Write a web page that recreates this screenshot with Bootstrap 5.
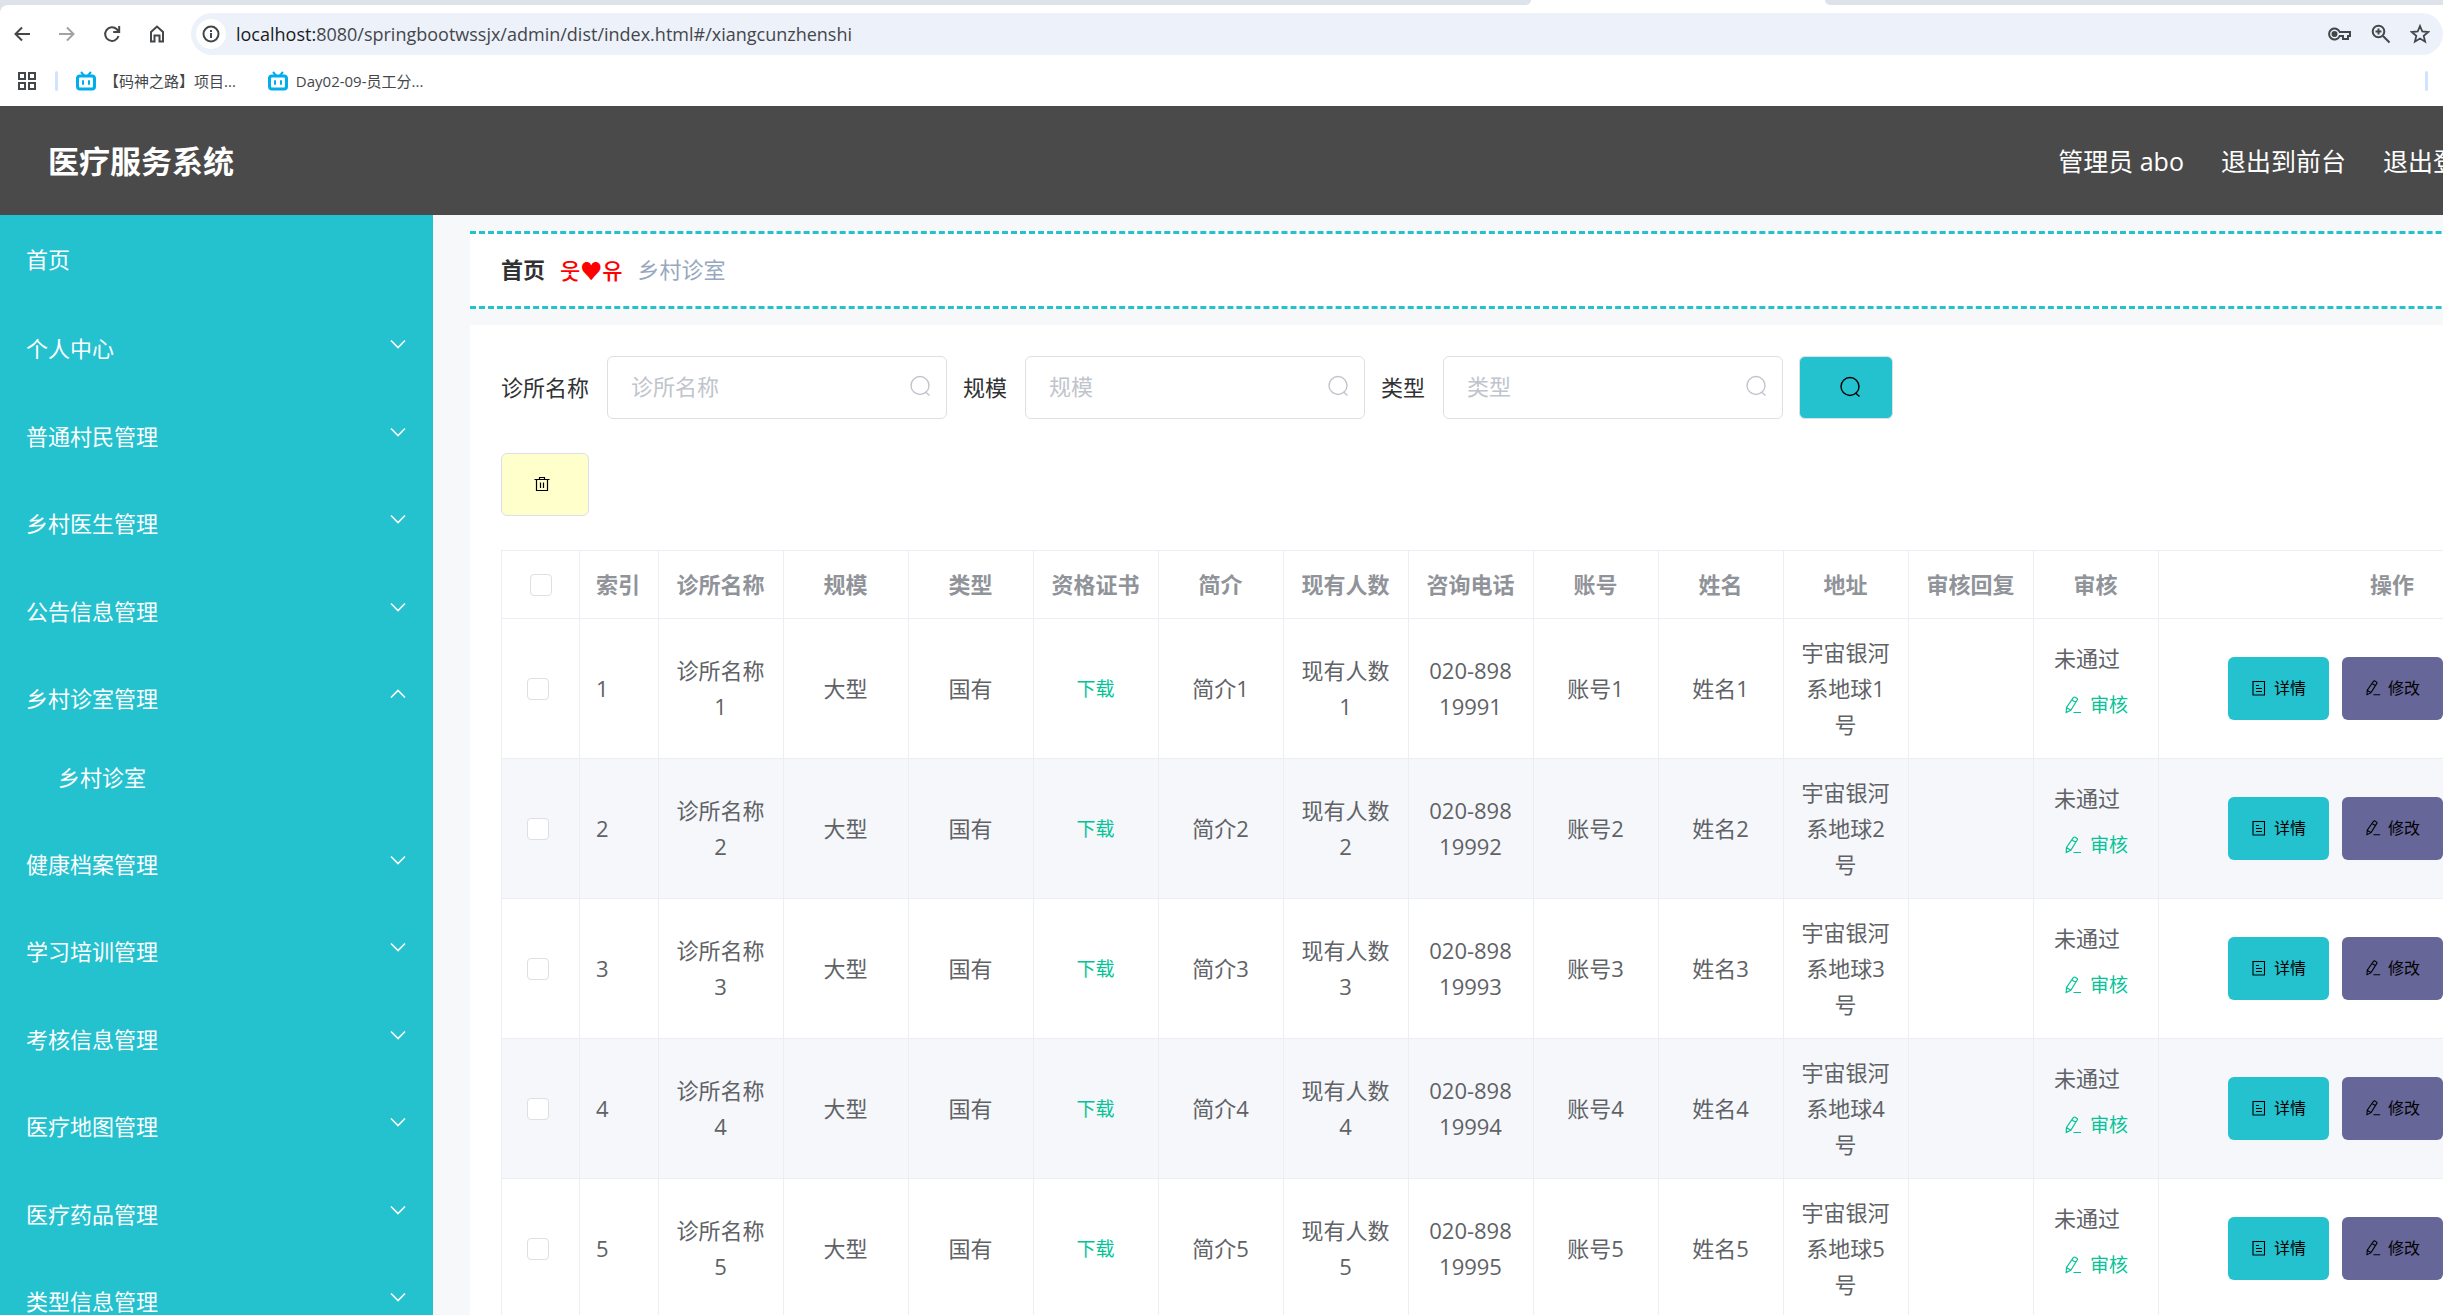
<!DOCTYPE html>
<html lang="zh-CN">
<head>
<meta charset="utf-8">
<meta name="viewport" content="width=device-width, initial-scale=1">
<title>医疗服务系统</title>
<link href="https://cdn.jsdelivr.net/npm/bootstrap@5.3.0/dist/css/bootstrap.min.css" rel="stylesheet">
<style>
:root{--teal:#24c2cf;--line:#ebeef5;--edge:#dcdfe6;--green:#06c397}
body{font-family:"Open Sans","Noto Sans CJK SC",sans-serif;font-size:22px;line-height:36px;color:#303133;background:#fff;height:100vh;overflow:hidden}
svg{display:block;flex:none;fill:none;stroke:currentColor}
a{text-decoration:none;color:inherit}
/* browser bars */
.chrome{background:#dee3ea;color:#44474a}
.strip{height:5px}
.strip .gap-l{flex:1;background:#dee3ea;border-bottom-right-radius:12px}
.strip .tab-on{width:294px}
.strip .gap-r{width:618px;background:#dee3ea;border-bottom-left-radius:12px}
.toolbar{border-top-left-radius:8px;padding:8px 0 0 12px}
.tool-btn{width:20px;height:20px;padding:0;border:0;background:none;color:inherit;flex:none}
.tool-btn.wide{width:24px}
.tools{gap:25px;width:179px}
.omni{height:42px;border-radius:21px;background:#ecf1fa;padding:0 13px 0 5px}
.omni-icons{gap:19px}
.info{width:30px;height:30px;border-radius:50%;background:#fff}
.url{border:0;background:none;outline:0;padding:0;margin-left:10px;font-size:18px;line-height:24px}
.url b{font-weight:400;color:#1a1b1d}
.marks{height:51px;padding:0 15px 0 17px;font-size:15px;line-height:20px}
.marks .bar{margin:0 18px}
.marks .bar:last-child{margin:0 0 0 auto}
.bar{width:3px;height:20px;border-radius:2px;background:#d3e3fd}
.bili{color:#00aeec}
/* application */
.shell{width:max-content;min-width:100%}
.topbar{height:109px;background:#4a4a4a;color:#fff;padding:0 212px 0 48px}
.brand-name{font-size:31px;font-weight:700;line-height:40px}
.topbar nav{gap:37px;font-size:25px}
.side{width:433px;background:var(--teal);color:#fff;flex:none;height:1100px}
.side li>a{display:flex;align-items:center;justify-content:space-between;height:87px;padding:0 27px 0 26px}
.side li:first-child{margin-bottom:2px}
.side li:nth-child(even)>a{height:88px}
.side li svg{margin-bottom:8px}
.side ul ul a{height:78px;padding-left:58px;padding-bottom:6px}
.side ul ul li:first-child>a{height:76px}
.page{background:#f7f8fa;padding:16px 37px 0}
.crumbs{background:#fff;border-top:3px dashed var(--teal);border-bottom:3px dashed var(--teal);height:78px;padding:0 31px 2px;gap:15px}
.crumbs .love{color:#f00;font-weight:500;font-family:"Noto Sans CJK KR",sans-serif}
.crumbs .here{color:#97a8be}
.panel{background:#fff;margin-top:16px;padding:31px;height:1000px}
.field{gap:18px}
.field label{padding-bottom:2px}
.field-box{position:relative;width:340px}
.field-box input{width:100%;height:63px;border:1px solid var(--edge);border-radius:6px;font-size:22px;padding:0 60px 3px 23px;box-shadow:none}
.field-box input::placeholder{color:#c0c4cc;opacity:1}
.field-box svg{position:absolute;right:16px;top:19px;color:#c0c4cc}
.filters{gap:16px}
.act{height:63px;border-radius:6px;border:1px solid var(--edge);color:#000;padding:0 0 2px;display:flex;align-items:center;justify-content:center}
.act:hover{color:#000}
.act-find{width:94px;background:var(--teal);padding-left:8px}
.act-del{width:88px;background:#ffc;margin-top:34px;padding-right:6px}
.grid{width:2126px;table-layout:fixed;border-collapse:collapse;margin-top:34px;border:1px solid var(--line)}
.grid th,.grid td{border:1px solid var(--line);padding:0 17px 2px 16px;text-align:center;word-break:break-all;color:#606266}
.grid th{height:68px;color:#909399;font-weight:700}
.grid td{height:140px}
.grid tbody tr:nth-child(even){background:#f5f7fb}
.grid .left{text-align:left}
.grid .form-check-input{width:22px;height:22px;border:1px solid var(--edge);border-radius:4px;margin:0;display:block;background-color:#fff}
.grid th .form-check-input{margin:0 auto}
.grid td.tick{padding:0 0 0 25px}
.grid th.tick{padding:0}
.txt-btn{border:0;background:none;color:var(--green);font-size:19px;padding:0 0 2px;line-height:32px}
.grid td.audit{text-align:left;padding-left:20px}
.grid td.audit .txt-btn{display:flex;align-items:center;gap:8px;height:60px;padding-left:10px}
.grid td.deeds{padding:0 0 0 69px}
.ops{gap:13px}
.ops .btn{height:63px;width:101px;border:0;border-radius:6px;font-size:16px;line-height:24px;padding:0 0 1px;color:#000;display:flex;align-items:center;justify-content:center;gap:7px}
.b-view{background:var(--teal)}.b-edit{background:#669}
</style>
<script src="https://cdn.jsdelivr.net/npm/bootstrap@5.3.0/dist/js/bootstrap.bundle.min.js"></script>
</head>
<body>
<svg width="0" height="0" class="position-absolute" aria-hidden="true">
  <symbol id="i-down" viewBox="0 0 16 10"><path d="M1 1.500l7 7 7-7" stroke-width="1.600"/></symbol>
  <symbol id="i-up" viewBox="0 0 16 10"><path d="M1 8.500l7-7 7 7" stroke-width="1.600"/></symbol>
  <symbol id="i-find" viewBox="0 0 22 22"><circle cx="11" cy="10.500" r="9" stroke-width="1.400"/><path d="M16.500 17l4 3.500" stroke-width="1.400"/></symbol>
  <symbol id="i-doc" viewBox="0 0 16 16"><path d="M2 1.500h11.500v13.500H2zM5 5.500h3M5 8.500h6M5 11.500h6" stroke-width="1.100"/></symbol>
  <symbol id="i-pen" viewBox="0 0 18 18"><path d="M9.500 1.500q.8-.8 1.600-.3l2 1.200q.7.600.2 1.400L6.800 14.200l-4.600 2.300.3-5zM8 4l4 2.400M2.600 11.800l4 2.300M9.500 16.500H17" stroke-width="1.200"/></symbol>
  <symbol id="i-bili" viewBox="0 0 20 20"><path d="M5.500 1.500l2.500 3M14.500 1.500l-2.500 3" stroke-width="2" stroke-linecap="round"/><rect x="1.500" y="5" width="17" height="13" rx="2.500" stroke-width="3"/><path d="M7 10v3M13 10v3" stroke-width="2" stroke-linecap="round"/></symbol>
</svg>

<header class="chrome">
  <div class="strip d-flex bg-white"><div class="gap-l"></div><div class="tab-on"></div><div class="gap-r"></div></div>
  <div class="toolbar bg-white d-flex align-items-center">
    <div class="tools d-flex align-items-center">
      <button class="tool-btn" aria-label="后退"><svg width="20" height="20" stroke-width="2"><path d="M18 10H3.500M10 3.500L3.500 10l6.500 6.500"/></svg></button>
      <button class="tool-btn" aria-label="前进"><svg width="20" height="20" stroke-width="2" opacity=".5"><path d="M2 10h14.500M10 3.500l6.500 6.500-6.500 6.500"/></svg></button>
      <button class="tool-btn" aria-label="刷新"><svg width="20" height="20" stroke-width="2"><path d="M16.500 12a6.800 6.800 0 1 1-1.700-6.700L17 7.500M17.200 2v6h-6"/></svg></button>
      <button class="tool-btn" aria-label="主页"><svg width="20" height="20" stroke-width="2"><path d="M4 8l6-5.500L16 8v9.500h-3.500v-6h-5v6H4z"/></svg></button>
    </div>
    <div class="omni d-flex align-items-center flex-grow-1">
      <span class="info d-flex align-items-center justify-content-center"><svg width="18" height="18" stroke-width="2"><circle cx="9" cy="9" r="7.500"/><path d="M9 8v5M9 5v2"/></svg></span>
      <div class="url flex-grow-1"><b>localhost:</b>8080/springbootwssjx/admin/dist/index.html#/xiangcunzhenshi</div>
      <div class="omni-icons d-flex align-items-center">
        <button class="tool-btn wide" aria-label="密码"><svg width="24" height="20" stroke-width="2"><path d="M11.700 8A5.500 5.500 0 1 0 11.700 12H15v3h5v-3h2V8z"/><circle cx="6.500" cy="10" r="2" fill="currentColor"/></svg></button>
        <button class="tool-btn" aria-label="缩放"><svg width="20" height="20" stroke-width="2"><circle cx="7.500" cy="7.500" r="5.800"/><path d="M12 12l6.500 6.500M7.500 4.500v6M4.500 7.500h6"/></svg></button>
        <button class="tool-btn" aria-label="收藏"><svg width="20" height="20" stroke-width="1.800"><path d="M10 2l2.300 5.500 5.900.5-4.500 3.900 1.400 5.800L10 14.600l-5.100 3.100 1.400-5.800L1.800 8l5.900-.5z"/></svg></button>
      </div>
    </div>
  </div>
  <div class="marks bg-white d-flex align-items-center">
    <button class="tool-btn" aria-label="应用"><svg width="20" height="20" stroke-width="2"><path d="M2 2h6v6H2zM12 2h6v6h-6zM2 12h6v6H2zM12 12h6v6h-6z"/></svg></button>
    <span class="bar"></span>
    <a href="#" class="d-flex align-items-center gap-2 me-4 pe-2"><svg class="bili" width="20" height="20"><use href="#i-bili"/></svg><span>【码神之路】项目...</span></a>
    <a href="#" class="d-flex align-items-center gap-2"><svg class="bili" width="20" height="20"><use href="#i-bili"/></svg><span>Day02-09-员工分...</span></a>
    <span class="bar"></span>
  </div>
</header>

<div class="shell">
  <div class="topbar d-flex align-items-center justify-content-between">
    <div class="brand-name">医疗服务系统</div>
    <nav class="d-flex"><span>管理员 abo</span><a href="#">退出到前台</a><a href="#">退出登录</a></nav>
  </div>
  <div class="d-flex">
    <aside class="side">
      <ul class="list-unstyled mb-0" id="menu"></ul>
    </aside>
    <main class="page flex-grow-1">
      <div class="crumbs d-flex align-items-center">
        <a href="#" class="fw-bold">首页</a><span class="love">웃♥유</span><span class="here">乡村诊室</span>
      </div>
      <section class="panel">
        <form class="filters d-flex align-items-center">
          <div class="field d-flex align-items-center"><label for="f1">诊所名称</label><div class="field-box"><input id="f1" class="form-control" placeholder="诊所名称"><svg width="22" height="22"><use href="#i-find"/></svg></div></div>
          <div class="field d-flex align-items-center"><label for="f2">规模</label><div class="field-box"><input id="f2" class="form-control" placeholder="规模"><svg width="22" height="22"><use href="#i-find"/></svg></div></div>
          <div class="field d-flex align-items-center"><label for="f3">类型</label><div class="field-box"><input id="f3" class="form-control" placeholder="类型"><svg width="22" height="22"><use href="#i-find"/></svg></div></div>
          <button type="button" class="btn act act-find" aria-label="查询"><svg width="22" height="22"><use href="#i-find"/></svg></button>
        </form>
        <button type="button" class="btn act act-del" aria-label="删除"><svg width="16" height="16" stroke-width="1.200"><path d="M.5 3.500h15M5.500 3.500v-2h5v2M2.500 3.500v11h11v-11M6.500 6.500v5.500M9.500 6.500v5.500"/></svg></button>
        <table class="grid">
          <colgroup><col style="width:78px"><col style="width:79px"><col span="12" style="width:125px"><col></colgroup>
          <thead><tr>
            <th class="tick"><input type="checkbox" class="form-check-input" aria-label="全选"></th>
            <th class="left">索引</th><th>诊所名称</th><th>规模</th><th>类型</th><th>资格证书</th><th>简介</th><th>现有人数</th><th>咨询电话</th><th>账号</th><th>姓名</th><th>地址</th><th>审核回复</th><th>审核</th><th>操作</th>
          </tr></thead>
          <tbody id="rows"></tbody>
        </table>
      </section>
    </main>
  </div>
</div>
<script>
const icon = (n, w, h) => `<svg width="${w}" height="${h}"><use href="#i-${n}"/></svg>`;
const names = ['首页','个人中心','普通村民管理','乡村医生管理','公告信息管理','乡村诊室管理','健康档案管理','学习培训管理','考核信息管理','医疗地图管理','医疗药品管理','类型信息管理'];
document.getElementById('menu').innerHTML = names.map((n, i) => {
  const open = n === '乡村诊室管理';
  return `<li><a href="#">${n}${i ? icon(open ? 'up' : 'down', 16, 10) : ''}</a>${open ? '<ul class="list-unstyled"><li><a href="#">乡村诊室</a></li></ul>' : ''}</li>`;
}).join('');
document.getElementById('rows').innerHTML = [1, 2, 3, 4, 5].map(n => `<tr>
  <td class="tick"><input type="checkbox" class="form-check-input" aria-label="选择${n}"></td>
  <td class="left">${n}</td><td>诊所名称${n}</td><td>大型</td><td>国有</td>
  <td><button class="txt-btn">下载</button></td><td>简介${n}</td><td>现有人数${n}</td><td>020-8981999${n}</td>
  <td>账号${n}</td><td>姓名${n}</td><td>宇宙银河系地球${n}号</td><td></td>
  <td class="audit">未通过<button class="txt-btn">${icon('pen', 18, 18)}审核</button></td>
  <td class="deeds"><div class="ops d-flex">
    <button class="btn b-view">${icon('doc', 16, 16)}详情</button><button class="btn b-edit">${icon('pen', 16, 16)}修改</button>
  </div></td></tr>`).join('');
</script>
</body>
</html>
